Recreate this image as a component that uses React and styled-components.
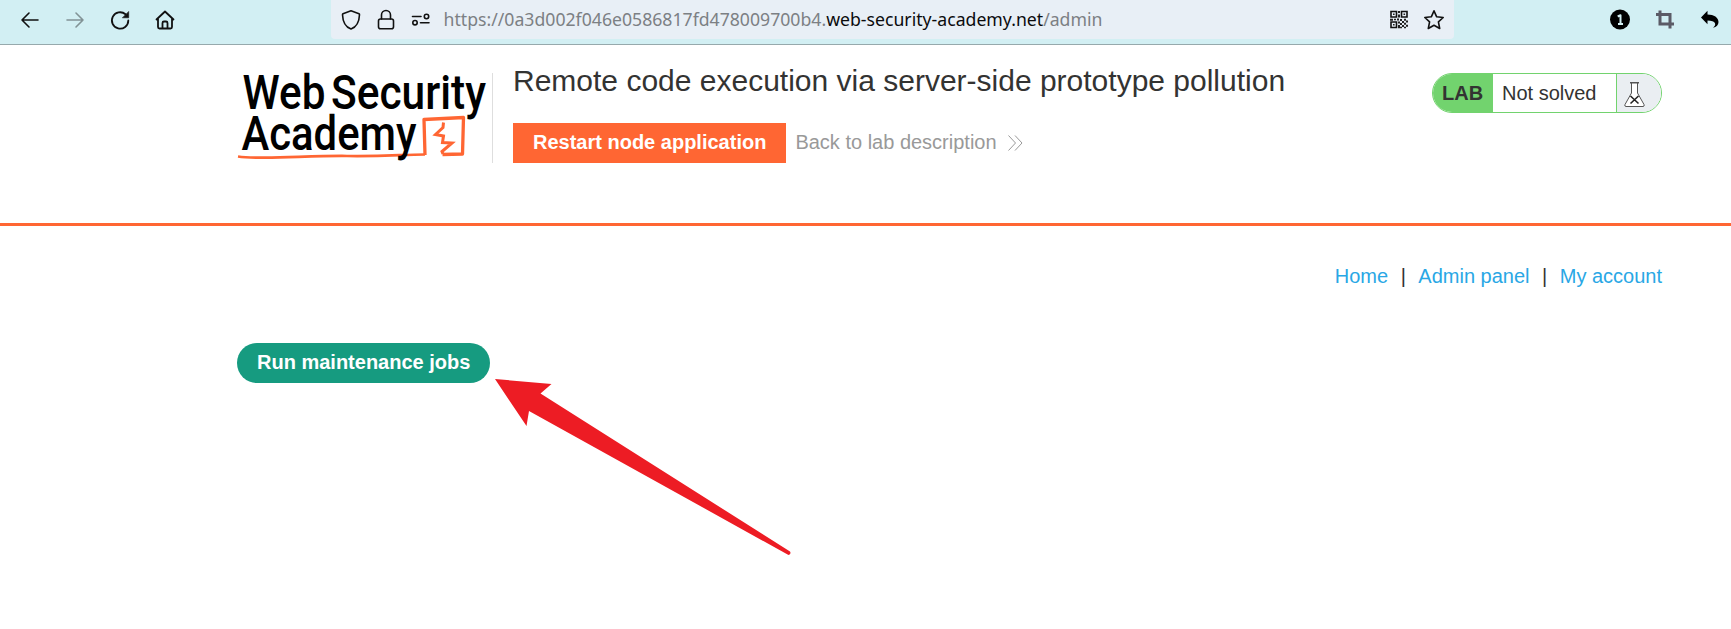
import React from "react";
import styled, { createGlobalStyle } from "styled-components";

const GlobalStyle = createGlobalStyle`
  *, *::before, *::after { box-sizing: border-box; }
  body {
    margin: 0;
    background: #fff;
    color: #333332;
    font-family: "Liberation Sans", Arial, sans-serif;
    font-size: 20px;
    overflow: hidden;
  }
`;

const Toolbar = styled.nav`
  display: flex;
  align-items: flex-start;
  height: 45px;
  background: #d2eff3;
  border-bottom: 1px solid #96a9ac;
`;

const NavButtons = styled.div`
  display: flex;
  align-items: center;
  gap: 24.9px;
  width: 331px;
  height: 39px;
  padding-left: 20px;
`;

const AddressBar = styled.div`
  display: flex;
  align-items: center;
  width: 1123px;
  height: 39px;
  padding: 0 10px;
  border-radius: 0 0 4px 4px;
  background: #e8eff6;
`;

const SiteIcons = styled.div`
  display: flex;
  gap: 15px;
`;

const Url = styled.div`
  flex: 1;
  padding: 0 0 1px 12.5px;
  font-family: "Noto Sans", sans-serif;
  font-size: 17.66px;
  line-height: 24px;
  white-space: nowrap;
  color: #7c8084;
`;

const Domain = styled.span`
  color: #0b0b0d;
`;

const PageActions = styled.div`
  display: flex;
  gap: 15px;
`;

const Extensions = styled.div`
  display: flex;
  align-items: center;
  gap: 25px;
  height: 39px;
  margin-left: 156px;
`;

const Icon = styled.svg`
  display: block;
  flex: none;
  width: 20px;
  height: 20px;
  fill: none;
  stroke: ${(p) => p.$color || "#111"};
  stroke-width: ${(p) => p.$weight || 1.6};
  stroke-linecap: round;
  stroke-linejoin: round;
  overflow: visible;
`;

const Banner = styled.header`
  height: 181px;
  padding: 19px 69px 0 237px;
  border-bottom: 3px solid #ff6633;
`;

const BannerRow = styled.div`
  display: flex;
  align-items: flex-start;
`;

const LogoLink = styled.div`
  width: 256px;
  height: 90px;
  margin-top: 9px;
  border-right: 1px solid #dedede;
`;

const LogoArt = styled.svg`
  display: block;
  overflow: visible;
  font-family: Roboto, sans-serif;
  font-weight: 500;
`;

const TitleBlock = styled.div`
  flex: 1;
  padding-left: 20px;
`;

const Title = styled.h2`
  margin: 0;
  font-size: 30px;
  font-weight: 400;
  line-height: 34px;
  white-space: nowrap;
`;

const Actions = styled.div`
  display: flex;
  align-items: center;
  gap: 9px;
  margin-top: 25px;
`;

const Button = styled.button`
  height: 40px;
  padding: 0 20px 1px;
  border: 0;
  border-radius: ${(p) => (p.$round ? "20px" : "0")};
  background: ${(p) => (p.$round ? "#169b80" : "#ff6633")};
  color: #fff;
  font: 700 20px/39px "Liberation Sans", Arial, sans-serif;
  white-space: nowrap;
`;

const BackLink = styled.a`
  display: flex;
  align-items: center;
  gap: 11px;
  padding-bottom: 1px;
  color: #999;
  white-space: nowrap;
`;

const Status = styled.div`
  display: flex;
  width: 230px;
  height: 40px;
  margin-top: 9px;
  overflow: hidden;
  border: 1px solid #72d36e;
  border-radius: 20px;
  line-height: 38px;
`;

const StatusTag = styled.span`
  width: 60px;
  padding-left: 9px;
  background: #72d36e;
  font-weight: 700;
  line-height: 39px;
`;

const StatusText = styled.span`
  flex: 1;
  padding-left: 9px;
`;

const StatusFlask = styled.span`
  width: 45px;
  padding: 7px 0 0 7px;
  border-left: 1px solid #72d36e;
  background: #eaeef2;
`;

const Content = styled.main`
  padding: 38px 69px 0 237px;
`;

const Links = styled.section`
  display: flex;
  justify-content: flex-end;
  gap: 12.5px;
  margin-bottom: 55px;
  line-height: 24px;
`;

const TextLink = styled.a`
  color: #29a7e5;
`;

const Pointer = styled.svg`
  position: absolute;
  left: 490px;
  top: 375px;
  width: 305px;
  height: 185px;
  fill: #ed1c24;
`;

function QrIcon() {
  return (
    <Icon viewBox="0 0 20 20">
      <g strokeLinejoin="miter" strokeLinecap="butt">
        <path d="M2 1.5h5.500v5.500H2zM12.500 1.500H18v5.500h-5.500zM2 12h5.500v5.500H2z" />
      </g>
      <path
        stroke="none"
        fill="#222"
        d="M4 3.500h1.600v1.600H4zM14.500 3.500h1.600v1.600h-1.600zM4 14h1.600v1.600H4zM9 1h2v2H9zM9 4.500h2v3H9zM1 8.700h3v2H1zM5 8.700h2v1.500H5zM8 8.500h2v2H8zM11 9h2v2h-2zM15 8.700h2v2h-2zM17 10.500h2v2h-2zM9 11.500h2v2H9zM13 11h2v2h-2zM11 13h2v2h-2zM15 12.700h2v2h-2zM9 15h2v3.300H9zM13 15h2v2h-2zM17 14.700h2v2h-2zM11 16.800h2v1.500h-2zM15 16.800h2v1.500h-2z"
      />
    </Icon>
  );
}

function Logo() {
  return (
    <LogoArt width="255" height="90" viewBox="0 0 255 90">
      <path
        d="M1 83.500C25 87 70 82.500 110 83S165 81.500 188 81.500"
        fill="none"
        stroke="#ff6633"
        strokeWidth="2.7"
      />
      <path
        d="M188 82L187 46.500 226.500 44.500 225.500 81 205.500 81.500"
        fill="none"
        stroke="#ff6633"
        strokeWidth="3.3"
        strokeLinejoin="round"
      />
      <path
        d="M206.500 49.500L206 54.500 198.500 61.500 206.500 63 205.500 69.500 215 70 205 78.500 206 81"
        fill="none"
        stroke="#ff6633"
        strokeWidth="3"
      />
      <text x="5.5" y="36.3" fontSize="47.5" textLength="83" lengthAdjust="spacingAndGlyphs">Web</text>
      <text x="94" y="36.3" fontSize="47.5" textLength="155" lengthAdjust="spacingAndGlyphs">Security</text>
      <text x="4.5" y="77" fontSize="47.5" textLength="175" lengthAdjust="spacingAndGlyphs">Academy</text>
    </LogoArt>
  );
}

function BrowserBar() {
  return (
    <Toolbar>
      <NavButtons>
        <Icon viewBox="0 0 20 20"><path d="M18 10H2M9 3L2 10l7 7" /></Icon>
        <Icon viewBox="0 0 20 20" $color="#829396"><path d="M2 10h16M11 3l7 7-7 7" /></Icon>
        <Icon viewBox="0 0 20 20" $weight="1.8">
          <path d="M18.300 10.500A8.200 8.200 0 1 1 15.500 4.300" />
          <path d="M18.700 1.800v6h-6z" fill="#111" strokeWidth=".6" />
        </Icon>
        <Icon viewBox="0 0 20 20" $weight="1.8">
          <path d="M1.500 9.500L10 1.500l8.500 8M3 8.500V17q0 1.500 1.500 1.500h11Q17 18.500 17 17V8.500M7.500 18v-5q0-1.500 1.500-1.500h2q1.500 0 1.500 1.500v5" />
        </Icon>
      </NavButtons>
      <AddressBar>
        <SiteIcons>
          <Icon viewBox="0 0 20 20">
            <path d="M10 .8L18 3.700q.6.300.5 1C18.200 12 15.500 17 10 19 4.500 17 1.800 12 1.500 4.700q0-.7.500-1z" />
          </Icon>
          <Icon viewBox="0 0 20 20">
            <rect x="2.5" y="9" width="15" height="9.8" rx="2" />
            <path d="M5.500 9V5a4.500 4.500 0 0 1 9 0v4" />
          </Icon>
          <Icon viewBox="0 0 20 20">
            <path d="M1.500 6.500H10M9.500 12.700h8.500" />
            <circle cx="15.5" cy="6.5" r="2.2" />
            <circle cx="4" cy="12.7" r="2.2" />
          </Icon>
        </SiteIcons>
        <Url>
          https://0a3d002f046e0586817fd478009700b4.<Domain>web-security-academy.net</Domain>/admin
        </Url>
        <PageActions>
          <QrIcon />
          <Icon viewBox="0 0 20 20">
            <path d="M10 .8l2.700 6 6.500.7-4.800 4.400 1.300 6.600L10 15.200l-5.700 3.300 1.300-6.600L.8 7.500l6.500-.7z" />
          </Icon>
        </PageActions>
      </AddressBar>
      <Extensions>
        <Icon viewBox="0 0 20 20">
          <circle cx="10" cy="9.5" r="10" fill="#000" stroke="none" />
          <path d="M7.700 6.500l2.800-1.300V14M8 14h5" stroke="#d2eff3" strokeWidth="2" strokeLinecap="butt" />
        </Icon>
        <Icon viewBox="0 0 20 20" $color="#5b5b66" $weight="3">
          <path d="M5 .5v13.500h14M1 4.500h14V18.500" strokeLinecap="butt" strokeLinejoin="miter" />
        </Icon>
        <Icon viewBox="0 0 20 20">
          <path
            d="M7.500.8V4.500C14 4.500 18.500 7.500 18.500 12c0 3-2 5-5.500 5.700 2-1.500 2.500-3 2-4.400-.7-2-3.500-2.800-7.500-2.800v3.700L1 7.500z"
            fill="#000"
            stroke="none"
          />
        </Icon>
      </Extensions>
    </Toolbar>
  );
}

export default function App() {
  return (
    <>
      <GlobalStyle />
      <BrowserBar />
      <Banner>
        <BannerRow>
          <LogoLink><Logo /></LogoLink>
          <TitleBlock>
            <Title>Remote code execution via server-side prototype pollution</Title>
            <Actions>
              <Button>Restart node application</Button>
              <BackLink>
                Back to lab description
                <svg width="15" height="16" fill="none" stroke="#999" strokeWidth="1">
                  <path d="M.5.500l7 7.500-7 7.500M7 .500l7 7.500-7 7.500" />
                </svg>
              </BackLink>
            </Actions>
          </TitleBlock>
          <Status>
            <StatusTag>LAB</StatusTag>
            <StatusText>Not solved</StatusText>
            <StatusFlask>
              <svg width="21" height="25" fill="none" stroke="#555" strokeWidth="1">
                <path d="M7.500 1v10L1 22.500q-.7 2 1 2h17q1.700 0 1-2L13.500 11V1" fill="#fff" />
                <path d="M6 .8h9" strokeWidth="1.6" />
                <path d="M6.500 14l8 7.500M14.500 14l-8 7.500" stroke="#222" strokeWidth="1.6" />
              </svg>
            </StatusFlask>
          </Status>
        </BannerRow>
      </Banner>
      <Content>
        <Links>
          <TextLink>Home</TextLink>
          <span>|</span>
          <TextLink>Admin panel</TextLink>
          <span>|</span>
          <TextLink>My account</TextLink>
        </Links>
        <Button $round>Run maintenance jobs</Button>
      </Content>
      <Pointer viewBox="490 375 305 185">
        <path d="M495 379L551.500 384 540.500 393.500 790 551.500Q791.500 554 788.500 555L529 411 526.500 426z" />
      </Pointer>
    </>
  );
}
